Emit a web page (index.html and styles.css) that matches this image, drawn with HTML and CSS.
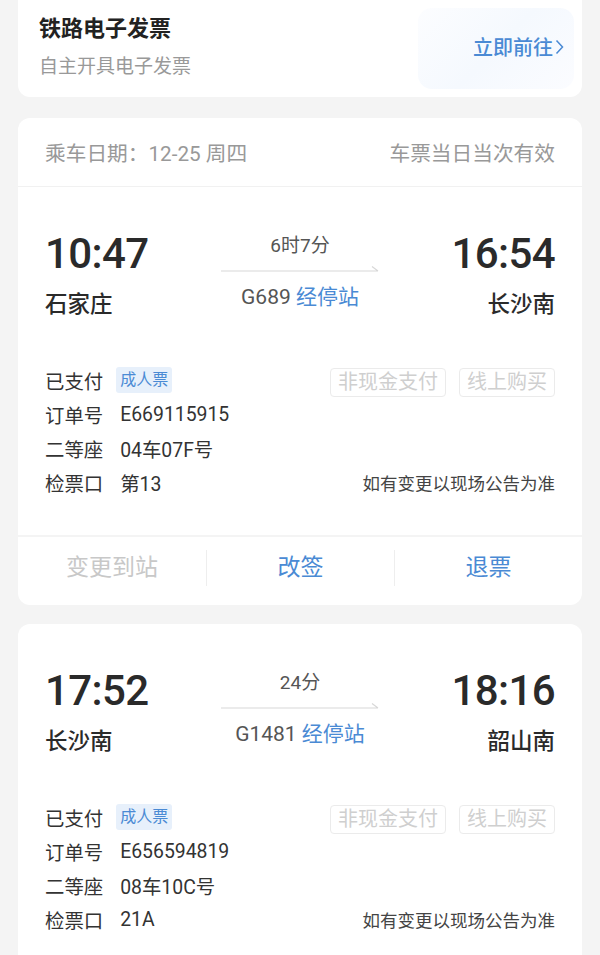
FILE: index.html
```html
<!DOCTYPE html>
<html lang="zh-CN">
<head>
<meta charset="utf-8">
<link rel="stylesheet" href="styles.css">
</head>
<body>
<div class="page">
  <section class="card invoice">
    <div class="invoice-text">
      <div class="invoice-title">铁路电子发票</div>
      <div class="invoice-sub">自主开具电子发票</div>
    </div>
    <div class="go">立即前往<svg class="chev" width="9" height="16" viewBox="0 0 9 16"><path d="M1.5 1.5 L7.5 8 L1.5 14.5" fill="none" stroke="#4a8ad4" stroke-width="1.5"/></svg></div>
  </section>

  <section class="card">
    <div class="card-head">
      <span>乘车日期：12-25 周四</span>
      <span>车票当日当次有效</span>
    </div>
    <div class="route">
      <div class="end">
        <div class="time">10:47</div>
        <div class="station">石家庄</div>
      </div>
      <div class="mid">
        <div class="dur">6时7分</div>
        <svg class="arrow" width="158" height="8" viewBox="0 0 158 8"><path d="M0 7 H157 M151 2.5 L157 7" fill="none" stroke="#d8d8d8" stroke-width="1.2"/></svg>
        <div class="code">G689 <span class="blue">经停站</span></div>
      </div>
      <div class="end right">
        <div class="time">16:54</div>
        <div class="station">长沙南</div>
      </div>
    </div>
    <div class="info">
      <div class="row">
        <span class="label">已支付</span><span class="tag">成人票</span>
        <span class="pills"><span class="pill">非现金支付</span><span class="pill">线上购买</span></span>
      </div>
      <div class="row"><span class="label">订单号</span><span class="val">E669115915</span></div>
      <div class="row"><span class="label">二等座</span><span class="val">04车07F号</span></div>
      <div class="row"><span class="label">检票口</span><span class="val">第13</span><span class="note">如有变更以现场公告为准</span></div>
    </div>
    <div class="actions">
      <div class="act disabled">变更到站</div>
      <div class="act">改签</div>
      <div class="act">退票</div>
    </div>
  </section>

  <section class="card last">
    <div class="route top">
      <div class="end">
        <div class="time">17:52</div>
        <div class="station">长沙南</div>
      </div>
      <div class="mid">
        <div class="dur">24分</div>
        <svg class="arrow" width="158" height="8" viewBox="0 0 158 8"><path d="M0 7 H157 M151 2.5 L157 7" fill="none" stroke="#d8d8d8" stroke-width="1.2"/></svg>
        <div class="code">G1481 <span class="blue">经停站</span></div>
      </div>
      <div class="end right">
        <div class="time">18:16</div>
        <div class="station">韶山南</div>
      </div>
    </div>
    <div class="info">
      <div class="row">
        <span class="label">已支付</span><span class="tag">成人票</span>
        <span class="pills"><span class="pill">非现金支付</span><span class="pill">线上购买</span></span>
      </div>
      <div class="row"><span class="label">订单号</span><span class="val">E656594819</span></div>
      <div class="row"><span class="label">二等座</span><span class="val">08车10C号</span></div>
      <div class="row"><span class="label">检票口</span><span class="val">21A</span><span class="note">如有变更以现场公告为准</span></div>
    </div>
  </section>
</div>
</body>
</html>
```
FILE: styles.css
```css
html, body {
  margin: 0;
  padding: 0;
  background: #f4f4f4;
  height: 955px;
  overflow: hidden;
}
body {
  font-family: "Roboto", "Noto Sans CJK SC", sans-serif;
  color: #333;
}
.page {
  padding: 0 18px;
}
.card {
  background: #fff;
  border-radius: 12px;
  margin-top: 21px;
  overflow: hidden;
}
.card.last {
  margin-top: 19px;
}
.invoice {
  margin-top: -12px;
  height: 109px;
  display: flex;
  align-items: stretch;
  justify-content: space-between;
  padding-left: 21px;
}
.invoice-text {
  padding-top: 26px;
}
.invoice-title {
  font-size: 22px;
  font-weight: 700;
  line-height: 30px;
  color: #222;
}
.invoice-sub {
  margin-top: 10px;
  font-size: 19px;
  line-height: 26px;
  color: #999;
}
.go {
  margin: 20px 8px 8px 0;
  width: 156px;
  border-radius: 14px;
  background: linear-gradient(135deg, #fcfdff 0%, #f5f9fe 50%, #fbfcff 100%);
  display: flex;
  align-items: center;
  justify-content: flex-end;
  padding-right: 10px;
  padding-bottom: 4px;
  box-sizing: border-box;
  color: #4a8ad4;
  font-size: 20px;
  font-weight: 500;
  gap: 2px;
}
.chev {
  margin-top: 1px;
}
.card-head {
  height: 68px;
  padding: 0 27px;
  display: flex;
  align-items: center;
  justify-content: space-between;
  border-bottom: 1px solid #f1f1f1;
  font-size: 20.7px;
  color: #999;
}
.route {
  display: grid;
  grid-template-columns: 1fr 158px 1fr;
  padding: 42px 27px 0;
}
.end {
  display: flex;
  flex-direction: column;
}
.end.right {
  align-items: flex-end;
}
.time {
  font-family: "Roboto", sans-serif;
  font-size: 42px;
  font-weight: 500;
  letter-spacing: -0.6px;
  line-height: 50px;
  color: #2a2a2a;
}
.station {
  margin-top: 10px;
  font-size: 22.5px;
  font-weight: 500;
  line-height: 30px;
  color: #2a2a2a;
  white-space: nowrap;
}
.mid {
  display: flex;
  flex-direction: column;
  align-items: center;
}
.dur {
  margin-top: 5px;
  font-size: 19px;
  line-height: 24px;
  color: #555;
}
.arrow {
  margin-top: 6px;
  display: block;
}
.code {
  margin-top: 11px;
  font-size: 21px;
  line-height: 28px;
  color: #555;
  white-space: nowrap;
}
.blue {
  color: #4a8ad4;
}
.info {
  margin-top: 44px;
  padding: 0 27px 36px;
}
.row {
  display: flex;
  align-items: center;
  height: 34px;
  font-size: 19.4px;
  white-space: nowrap;
}
.label {
  flex-shrink: 0;
  margin-right: 17px;
  color: #333;
}
.val {
  color: #333;
}
.tag {
  margin-left: -4px;
  padding: 0 4px;
  height: 26px;
  line-height: 26px;
  font-size: 16px;
  background: #e7f0fb;
  color: #4a8ad4;
  border-radius: 3px;
}
.pills {
  margin-left: auto;
  display: flex;
  gap: 13px;
  margin-top: 4px;
}
.pill {
  height: 27px;
  line-height: 27px;
  padding: 0 7px;
  border: 1px solid #ebebeb;
  border-radius: 4px;
  font-size: 20px;
  color: #cfcfcf;
}
.note {
  margin-left: auto;
  font-size: 17.5px;
  color: #444;
}
.actions {
  border-top: 2px solid #f4f4f4;
  height: 70px;
  padding-bottom: 6px;
  box-sizing: border-box;
  display: grid;
  grid-template-columns: 1fr 1fr 1fr;
  align-items: center;
}
.act {
  text-align: center;
  font-size: 23px;
  color: #4a8ad4;
  line-height: 36px;
  border-left: 1px solid #eeeeee;
}
.act:first-child {
  border-left: none;
}
.act.disabled {
  color: #c8c8c8;
}
```
